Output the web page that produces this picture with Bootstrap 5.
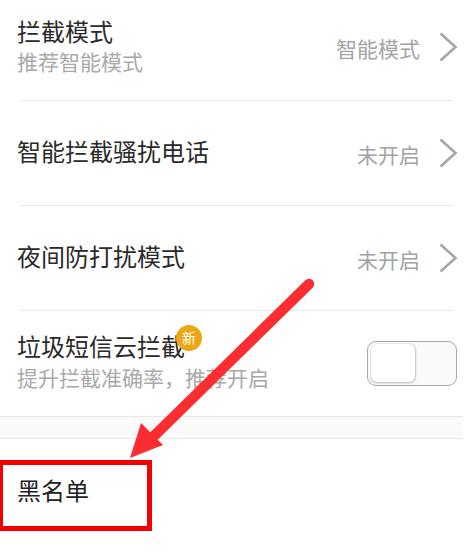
<!DOCTYPE html>
<html lang="zh-CN">
<head>
<meta charset="utf-8">
<title>骚扰拦截</title>
<link rel="stylesheet" href="https://cdn.jsdelivr.net/npm/bootstrap@5.3.0/dist/css/bootstrap.min.css">
<style>
html, body { background: #fff; overflow: hidden; }
body { font-family: "Liberation Sans", "Noto Sans CJK SC", sans-serif; }
.screen { position: relative; width: 463px; height: 552px; }
.set-row { margin: 0 10px 0 20px; border-bottom: 1px solid #e9e9e9; }
.set-row.h1row { height: 101px; padding-bottom: 6px; }
.set-row.h2row { height: 105px; }
.set-row.h3row { height: 105px; border-bottom: 0; }
.set-title { font-size: 24px; line-height: 30px; color: #2a2a2a; margin-left: -3px; }
.h1row .set-sub { margin-top: 1px; }
.h3row .set-title { margin-bottom: 2px; margin-top: -2px; }
.set-sub { font-size: 21px; line-height: 28px; color: #a9a9a9; margin-left: -3px; }
.set-val { font-size: 21px; line-height: 28px; color: #a3a3a3; margin-top: 5px; }
.chev { width: 20px; height: 30px; margin-left: 18px; margin-right: -5px; }
.title-wrap { position: relative; }
.new-dot { position: absolute; left: 159px; top: -8px; width: 26px; height: 26px; border-radius: 50%; background: #eba714; color: #fff; font-size: 14px; line-height: 26px; text-align: center; }
.sw { width: 90px; height: 45px; border: 1px solid #a8a8a8; border-radius: 9px; background: #fafafa; padding: 2px 3px 3px 3px; margin-right: -4px; }
.sw-knob { width: 44px; height: 38px; background: #fff; border-radius: 6px; box-shadow: 0 1px 2px #bbb, 1px 0 2px #ccc, 0 0 1px #ccc; }
.band { height: 23px; background: #fafafa; border-top: 1px solid #e6e6e6; border-bottom: 1px solid #e6e6e6; }
.last-row { padding: 38px 0 0 17px; }
.last-title { font-size: 24px; line-height: 30px; color: #222; }
.mark-box { position: absolute; left: -2px; top: 460px; width: 154px; height: 71px; border: 5px solid #f40000; }
.mark-arrow { position: absolute; left: 0; top: 0; width: 463px; height: 552px; pointer-events: none; }
</style>
</head>
<body>
<div class="screen">
  <div class="set-row h1row d-flex align-items-center justify-content-between">
    <div>
      <div class="set-title">拦截模式</div>
      <div class="set-sub">推荐智能模式</div>
    </div>
    <div class="d-flex align-items-center">
      <span class="set-val">智能模式</span>
      <svg class="chev" viewBox="0 0 20 30"><path d="M2.5 1.5 L17.5 15 L2.5 28.5" fill="none" stroke="#a6a6a6" stroke-width="2.6"/></svg>
    </div>
  </div>
  <div class="set-row h2row d-flex align-items-center justify-content-between">
    <div class="set-title">智能拦截骚扰电话</div>
    <div class="d-flex align-items-center">
      <span class="set-val">未开启</span>
      <svg class="chev" viewBox="0 0 20 30"><path d="M2.5 1.5 L17.5 15 L2.5 28.5" fill="none" stroke="#a6a6a6" stroke-width="2.6"/></svg>
    </div>
  </div>
  <div class="set-row h2row d-flex align-items-center justify-content-between">
    <div class="set-title">夜间防打扰模式</div>
    <div class="d-flex align-items-center">
      <span class="set-val">未开启</span>
      <svg class="chev" viewBox="0 0 20 30"><path d="M2.5 1.5 L17.5 15 L2.5 28.5" fill="none" stroke="#a6a6a6" stroke-width="2.6"/></svg>
    </div>
  </div>
  <div class="set-row h3row d-flex align-items-center justify-content-between">
    <div>
      <div class="set-title title-wrap">垃圾短信云拦截<span class="new-dot">新</span></div>
      <div class="set-sub">提升拦截准确率，推荐开启</div>
    </div>
    <div class="sw"><div class="sw-knob"></div></div>
  </div>
  <div class="band"></div>
  <div class="last-row"><div class="last-title">黑名单</div></div>
  <div class="mark-box"></div>
  <svg class="mark-arrow" viewBox="0 0 463 552">
    <path d="M309 284 L153 437" stroke="#fb2d30" stroke-width="10.5" stroke-linecap="round" fill="none"/>
    <path d="M130 458 L141 423 L163 445 Z" fill="#fb2d30"/>
  </svg>
</div>
</body>
</html>
